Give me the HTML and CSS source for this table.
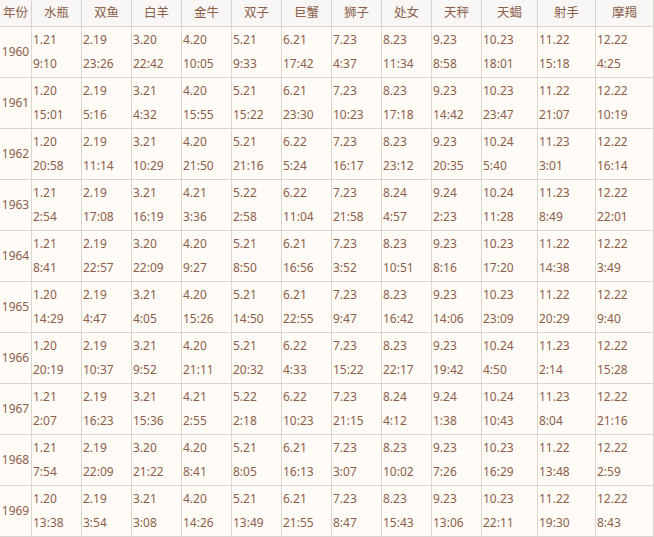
FILE: index.html
```html
<!DOCTYPE html>
<html lang="zh">
<head>
<meta charset="utf-8">
<link rel="stylesheet" href="styles.css">
</head>
<body>
<table class="zodiac">
<colgroup>
<col class="c-year"><col class="c-n"><col class="c-n"><col class="c-n"><col class="c-n"><col class="c-n"><col class="c-n"><col class="c-n"><col class="c-n"><col class="c-n"><col class="c-w1"><col class="c-w2"><col class="c-w3">
</colgroup>
<thead>
<tr><th>年份</th><th>水瓶</th><th>双鱼</th><th>白羊</th><th>金牛</th><th>双子</th><th>巨蟹</th><th>狮子</th><th>处女</th><th>天秤</th><th>天蝎</th><th>射手</th><th>摩羯</th></tr>
</thead>
<tbody>
<tr><td class="yr">1960</td><td>1.21<br>9:10</td><td>2.19<br>23:26</td><td>3.20<br>22:42</td><td>4.20<br>10:05</td><td>5.21<br>9:33</td><td>6.21<br>17:42</td><td>7.23<br>4:37</td><td>8.23<br>11:34</td><td>9.23<br>8:58</td><td>10.23<br>18:01</td><td>11.22<br>15:18</td><td>12.22<br>4:25</td></tr>
<tr><td class="yr">1961</td><td>1.20<br>15:01</td><td>2.19<br>5:16</td><td>3.21<br>4:32</td><td>4.20<br>15:55</td><td>5.21<br>15:22</td><td>6.21<br>23:30</td><td>7.23<br>10:23</td><td>8.23<br>17:18</td><td>9.23<br>14:42</td><td>10.23<br>23:47</td><td>11.22<br>21:07</td><td>12.22<br>10:19</td></tr>
<tr><td class="yr">1962</td><td>1.20<br>20:58</td><td>2.19<br>11:14</td><td>3.21<br>10:29</td><td>4.20<br>21:50</td><td>5.21<br>21:16</td><td>6.22<br>5:24</td><td>7.23<br>16:17</td><td>8.23<br>23:12</td><td>9.23<br>20:35</td><td>10.24<br>5:40</td><td>11.23<br>3:01</td><td>12.22<br>16:14</td></tr>
<tr><td class="yr">1963</td><td>1.21<br>2:54</td><td>2.19<br>17:08</td><td>3.21<br>16:19</td><td>4.21<br>3:36</td><td>5.22<br>2:58</td><td>6.22<br>11:04</td><td>7.23<br>21:58</td><td>8.24<br>4:57</td><td>9.24<br>2:23</td><td>10.24<br>11:28</td><td>11.23<br>8:49</td><td>12.22<br>22:01</td></tr>
<tr><td class="yr">1964</td><td>1.21<br>8:41</td><td>2.19<br>22:57</td><td>3.20<br>22:09</td><td>4.20<br>9:27</td><td>5.21<br>8:50</td><td>6.21<br>16:56</td><td>7.23<br>3:52</td><td>8.23<br>10:51</td><td>9.23<br>8:16</td><td>10.23<br>17:20</td><td>11.22<br>14:38</td><td>12.22<br>3:49</td></tr>
<tr><td class="yr">1965</td><td>1.20<br>14:29</td><td>2.19<br>4:47</td><td>3.21<br>4:05</td><td>4.20<br>15:26</td><td>5.21<br>14:50</td><td>6.21<br>22:55</td><td>7.23<br>9:47</td><td>8.23<br>16:42</td><td>9.23<br>14:06</td><td>10.23<br>23:09</td><td>11.22<br>20:29</td><td>12.22<br>9:40</td></tr>
<tr><td class="yr">1966</td><td>1.20<br>20:19</td><td>2.19<br>10:37</td><td>3.21<br>9:52</td><td>4.20<br>21:11</td><td>5.21<br>20:32</td><td>6.22<br>4:33</td><td>7.23<br>15:22</td><td>8.23<br>22:17</td><td>9.23<br>19:42</td><td>10.24<br>4:50</td><td>11.23<br>2:14</td><td>12.22<br>15:28</td></tr>
<tr><td class="yr">1967</td><td>1.21<br>2:07</td><td>2.19<br>16:23</td><td>3.21<br>15:36</td><td>4.21<br>2:55</td><td>5.22<br>2:18</td><td>6.22<br>10:23</td><td>7.23<br>21:15</td><td>8.24<br>4:12</td><td>9.24<br>1:38</td><td>10.24<br>10:43</td><td>11.23<br>8:04</td><td>12.22<br>21:16</td></tr>
<tr><td class="yr">1968</td><td>1.21<br>7:54</td><td>2.19<br>22:09</td><td>3.20<br>21:22</td><td>4.20<br>8:41</td><td>5.21<br>8:05</td><td>6.21<br>16:13</td><td>7.23<br>3:07</td><td>8.23<br>10:02</td><td>9.23<br>7:26</td><td>10.23<br>16:29</td><td>11.22<br>13:48</td><td>12.22<br>2:59</td></tr>
<tr><td class="yr">1969</td><td>1.20<br>13:38</td><td>2.19<br>3:54</td><td>3.21<br>3:08</td><td>4.20<br>14:26</td><td>5.21<br>13:49</td><td>6.21<br>21:55</td><td>7.23<br>8:47</td><td>8.23<br>15:43</td><td>9.23<br>13:06</td><td>10.23<br>22:11</td><td>11.22<br>19:30</td><td>12.22<br>8:43</td></tr>
</tbody>
</table>
</body>
</html>
```
FILE: styles.css
```css
html, body {
  margin: 0;
  padding: 0;
  background: #fffcf7;
}
.zodiac {
  border-collapse: collapse;
  table-layout: fixed;
  width: 654px;
  margin-left: -1px;
  margin-top: -1px;
  font-family: "Noto Sans", "Noto Sans CJK SC", sans-serif;
  font-size: 12px;
  color: #8d5e4b;
}
.c-year { width: 32px; }
.c-n { width: 50px; }
.c-w1 { width: 56px; }
.c-w2 { width: 58px; }
.c-w3 { width: 58px; }
.zodiac th,
.zodiac td {
  border: 1px solid #d9d6d2;
  padding: 1px 0 1px 1px;
  line-height: 24px;
  overflow: hidden;
  white-space: nowrap;
}
.zodiac th {
  background: #f8f7f5;
  font-weight: normal;
  font-size: 12.5px;
  text-align: center;
  padding: 0;
  height: 26px;
}
.zodiac td {
  background: #fffcf7;
  text-align: left;
  vertical-align: middle;
}
.zodiac td.yr {
  padding-left: 0;
  text-align: center;
}
```
